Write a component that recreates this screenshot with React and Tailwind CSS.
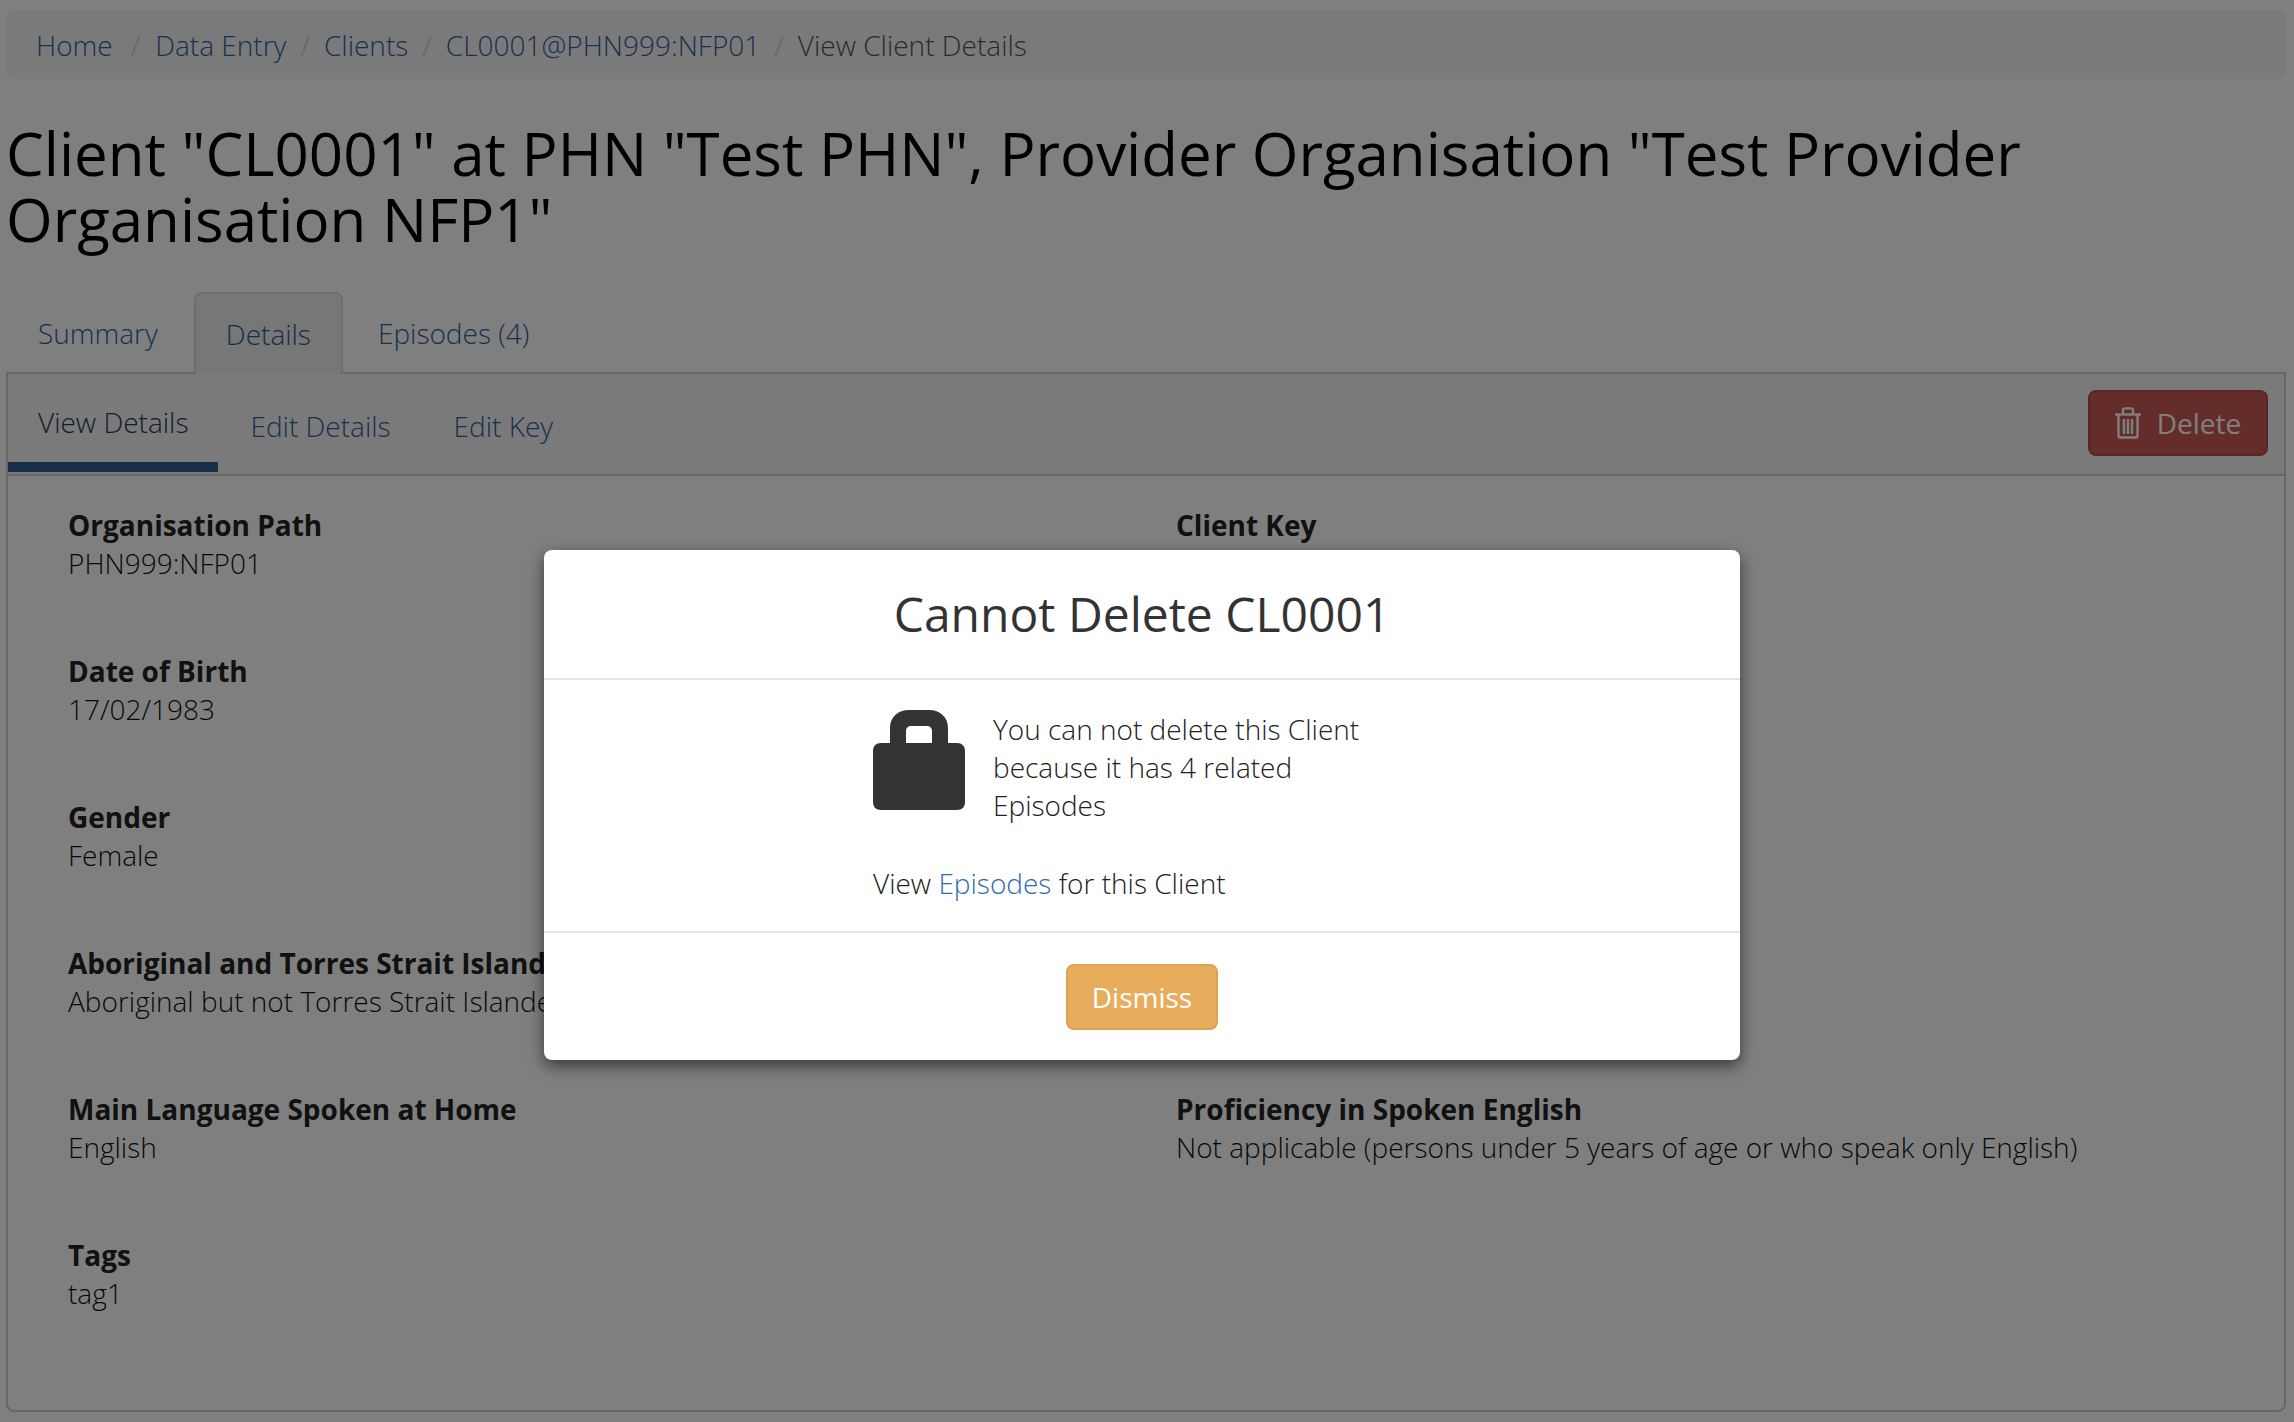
import { useState } from 'react'

const crumbs = ['Home', 'Data Entry', 'Clients', 'CL0001@PHN999:NFP01']

const leftFields = [
  ['Organisation Path', 'PHN999:NFP01'],
  ['Date of Birth', '17/02/1983'],
  ['Gender', 'Female'],
  ['Aboriginal and Torres Strait Islander Status', 'Aboriginal but not Torres Strait Islander origin'],
  ['Main Language Spoken at Home', 'English'],
  ['Tags', 'tag1'],
]

const rightFields = [
  ['Client Key', ''],
  ['', ''],
  ['', ''],
  ['', ''],
  ['Proficiency in Spoken English', 'Not applicable (persons under 5 years of age or who speak only English)'],
  ['', ''],
]

function Field({ label, value }) {
  return (
    <div className="h-[146.1px] whitespace-nowrap">
      <div className="font-bold text-[#222] leading-[38px]">{label}</div>
      <div className="leading-[38px]">{value}</div>
    </div>
  )
}

function TrashIcon() {
  return (
    <svg width="26" height="32" viewBox="0 0 26 32" fill="none" stroke="currentColor" strokeWidth="2.4">
      <path d="M0 7.5h26" />
      <path d="M8 7V3a1.6 1.6 0 0 1 1.6-1.6h6.8A1.6 1.6 0 0 1 18 3v4" />
      <path d="M3.5 8v20.5a2 2 0 0 0 2 2h15a2 2 0 0 0 2-2V8" />
      <path d="M9 12v15M13 12v15M17 12v15" />
    </svg>
  )
}

function LockIcon() {
  return (
    <svg width="92" height="100" viewBox="0 0 92 100" className="shrink-0">
      <path
        fill="#333"
        fillRule="evenodd"
        d="M17 33V18C17 7 25 0 36 0h20c11 0 19 7 19 18v15h9c5 0 8 3 8 8v51c0 5-3 8-8 8H8c-5 0-8-3-8-8V41c0-5 3-8 8-8h9zM33 33h26V21c0-3-2-5-5-5H38c-3 0-5 2-5 5v12z"
      />
    </svg>
  )
}

export default function App() {
  const [open] = useState(true)

  return (
    <div className="relative h-[1422px] overflow-hidden bg-white text-[28px] font-light text-[#111] font-['Open_Sans',sans-serif]">
      {/* Page behind the dialog */}
      <div className="pl-[6px] pr-[8px] pt-[10px]">
        <nav className="flex h-[69px] items-center rounded-lg bg-[#f5f5f5] pl-[30px]">
          {crumbs.map((c, i) => (
            <span key={c} className="flex items-center">
              <a className="text-[#2f62a0]">{c}</a>
              <span className={i === 0 ? 'pl-[18px] pr-[15px] text-[#ccc]' : 'px-[14px] text-[#ccc]'}>/</span>
            </span>
          ))}
          <span className="text-[#555]">View Client Details</span>
        </nav>

        <h1 className="mt-[41px] text-[60px] font-normal leading-[66px] text-black">
          Client "CL0001" at PHN "Test PHN", Provider Organisation "Test Provider Organisation NFP1"
        </h1>

        {/* Main tabs */}
        <div className="mt-[40px] flex h-[80px] pl-[1px] text-[#2f62a0]">
          <a className="flex items-center pl-[31px] pr-[36px] pt-[1px]">Summary</a>
          <a className="-mb-[2px] flex items-center rounded-t-lg border-x-2 border-t-2 border-[#ddd] bg-[#eee] px-[30px] text-[#2c5a8c]">Details</a>
          <a className="flex items-center pl-[35px] pr-[31px] pt-[1px]">Episodes (4)</a>
        </div>

        {/* Panel */}
        <div className="h-[1040px] rounded-b-lg border-2 border-[#ccc]">
          <div className="flex h-[102px] items-start justify-between border-b-2 border-[#ccc] bg-[#f5f5f5]">
            <div className="flex h-full">
              <a className="flex h-[98px] items-center border-b-[10px] border-[#2f5f96] pl-[30px] pr-[30px] pt-[7px] text-[#1f3a5c]">View Details</a>
              <a className="flex h-[98px] items-center pl-[32px] pr-[31px] pt-[5px] text-[#2f62a0]">Edit Details</a>
              <a className="flex h-[98px] items-center pl-[32px] pr-[31px] pt-[5px] text-[#2f62a0]">Edit Key</a>
            </div>
            <button className="mr-[16px] mt-[16px] flex h-[66px] w-[180px] items-center justify-center gap-[16px] rounded-lg border-2 border-[#bb4a45] bg-[#ca5b54] font-normal text-white">
              <TrashIcon />
              Delete
            </button>
          </div>
          <div className="grid grid-cols-[1108px_1fr] pl-[60px] pt-[30px]">
            <div>
              {leftFields.map(([l, v]) => <Field key={l} label={l} value={v} />)}
            </div>
            <div>
              {rightFields.map(([l, v], i) => <Field key={i} label={l} value={v} />)}
            </div>
          </div>
        </div>
      </div>

      {/* Backdrop and dialog */}
      {open && (
        <div className="absolute inset-0 bg-black/50 pl-[544px] pt-[550px]">
          <div className="h-[510px] w-[1196px] overflow-hidden rounded-lg bg-white shadow-[0_6px_16px_rgba(0,0,0,0.55)]">
            <div className="flex h-[130px] items-center justify-center border-b-2 border-[#e5e5e5]">
              <h2 className="text-[48px] font-normal leading-[60px] text-[#333]">Cannot Delete CL0001</h2>
            </div>
            <div className="h-[253px] border-b-2 border-[#e5e5e5] pl-[329px] pt-[30px] text-[#222]">
              <div className="flex">
                <LockIcon />
                <p className="ml-[28px] w-[400px] leading-[38px]">
                  You can not delete this Client because it has 4 related Episodes
                </p>
              </div>
              <p className="mt-[40px] leading-[38px]">
                View <a className="text-[#2f6bb0]">Episodes</a> for this Client
              </p>
            </div>
            <div className="flex justify-center pt-[31px]">
              <button className="h-[66px] w-[152px] rounded-lg border-2 border-[#dda34f] bg-[#e8ad5c] font-medium text-white">
                Dismiss
              </button>
            </div>
          </div>
        </div>
      )}
    </div>
  )
}
